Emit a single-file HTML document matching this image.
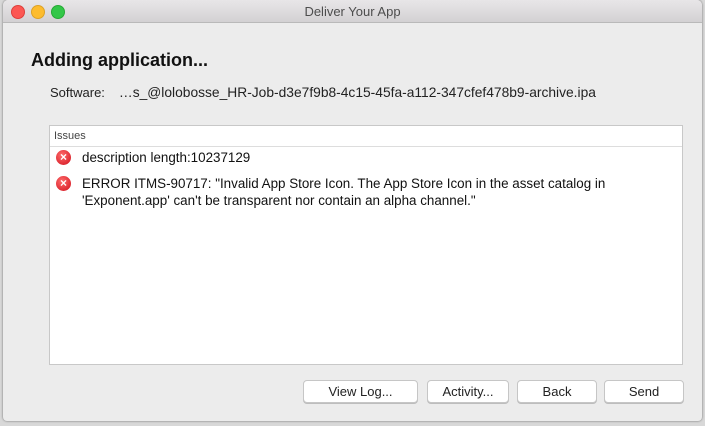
<!DOCTYPE html><html><head><style>
body{margin:0;width:705px;height:426px;background:#d8d8d8;position:relative;overflow:hidden;font-family:"Liberation Sans",sans-serif;}
.win{position:absolute;left:3px;top:0;width:699px;height:421px;background:#ececec;border-radius:5px 5px 4px 4px;box-shadow:0 0 2px rgba(0,0,0,.5);overflow:hidden}
.tb{height:22px;background:linear-gradient(#e8e6e8,#d3d1d3);border-bottom:1px solid #b9b9b9;text-align:center;font-size:13px;line-height:23px;color:#4d4d4d}
.l{position:absolute;top:5px;width:12px;height:12px;border-radius:50%}
.h{position:absolute;left:28px;top:50px;font-size:18px;font-weight:bold;color:#111}
.s{position:absolute;left:47px;top:85px;font-size:13px;color:#222}
.s span{font-size:13.8px;margin-left:14px}
.p{position:absolute;left:46px;top:125px;width:632px;height:238px;background:#fff;border:1px solid #c8c8c8}
.ih{height:20px;border-bottom:1px solid #ddd;font-size:11px;line-height:20px;padding-left:4px;color:#444}
.r{position:absolute;left:32px;font-size:13.4px;color:#111;line-height:17px}
.x{position:absolute;left:6px;width:15px;height:15px;border-radius:50%;background:radial-gradient(circle at 40% 35%,#ff6b6b,#d0101c);color:#fff;font-size:12px;line-height:14px;text-align:center;font-weight:bold}
.b{position:absolute;top:380px;height:21px;background:#fff;border:1px solid #c6c6c6;border-radius:4px;font-size:13px;line-height:21px;text-align:center;color:#222;box-shadow:0 1px 0 #bdbdbd}
</style></head><body><div class="win">
<div class="tb">Deliver Your App</div>
<div class="l" style="left:8px;background:#fc5753;border:.5px solid #de3f3b"></div>
<div class="l" style="left:28px;background:#fdbc2e;border:.5px solid #dea225"></div>
<div class="l" style="left:48px;background:#33c748;border:.5px solid #27aa35"></div>
<div class="h">Adding application...</div>
<div class="s">Software:<span>…s_@lolobosse_HR-Job-d3e7f9b8-4c15-45fa-a112-347cfef478b9-archive.ipa</span></div>
<div class="p"><div class="ih">Issues</div>
<div class="x" style="top:24px">×</div><div class="r" style="top:23px">description length:10237129</div>
<div class="x" style="top:50px">×</div><div class="r" style="top:49px">ERROR ITMS-90717: "Invalid App Store Icon. The App Store Icon in the asset catalog in<br>'Exponent.app' can't be transparent nor contain an alpha channel."</div>
</div>
<div class="b" style="left:300px;width:113px">View Log...</div>
<div class="b" style="left:424px;width:80px">Activity...</div>
<div class="b" style="left:514px;width:78px">Back</div>
<div class="b" style="left:601px;width:78px">Send</div>
</div></body></html>
